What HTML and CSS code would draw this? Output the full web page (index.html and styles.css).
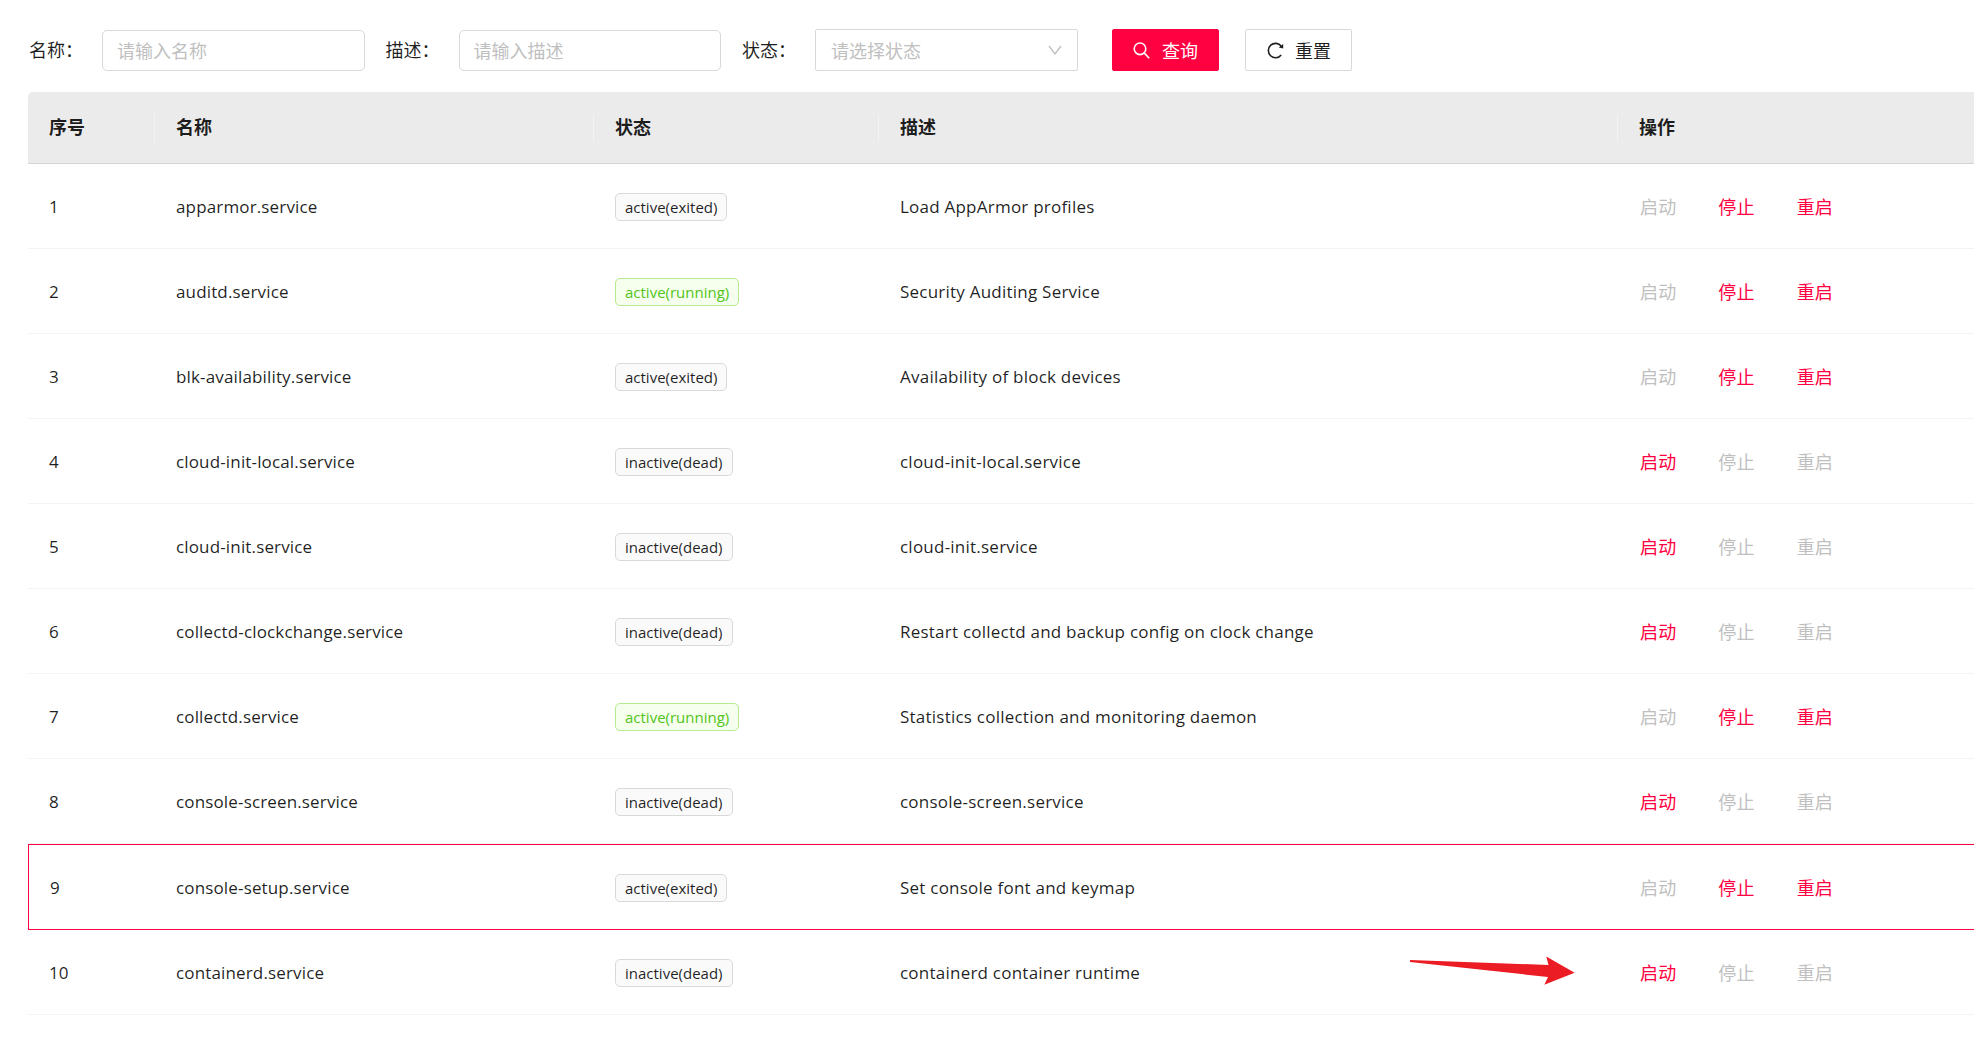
FILE: index.html
```html
<!DOCTYPE html>
<html lang="zh-CN">
<head>
    <meta charset="UTF-8">
    <meta name="viewport" content="width=device-width, initial-scale=1.0">
    <title>服务管理</title>
    <link rel="stylesheet" href="styles.css">
</head>
<body>

<div class="container">
    <form class="search-form">
        <label for="name">名称：</label>
        <input type="text" id="name" name="name" placeholder="请输入名称">

        <label for="desc">描述：</label>
        <input type="text" id="desc" name="desc" placeholder="请输入描述">

        <label for="status">状态：</label>
        <div class="select" id="status">
            <span>请选择状态</span>
            <svg class="arrow" viewBox="0 0 14 10"><path d="M1 1L7 9L13 1"/></svg>
        </div>

        <button type="button" class="btn btn-primary">
            <svg class="icon" viewBox="0 0 18 18"><circle cx="7" cy="7.8" r="5.8"/><path d="M11.1 11.9L16.2 17.2"/></svg>
            <span>查询</span>
        </button>
        <button type="reset" class="btn">
            <svg class="icon" viewBox="0 0 18 18"><path d="M15.2 14A7.2 7.2 0 1 1 15.3 5.2"/><path class="fill" d="M17.2 3V7.4L12.8 6.4Z"/></svg>
            <span>重置</span>
        </button>
    </form>

    <table class="service-table">
        <thead>
            <tr>
                <th class="col-index">序号</th>
                <th class="col-name">名称</th>
                <th class="col-status">状态</th>
                <th class="col-desc">描述</th>
                <th>操作</th>
            </tr>
        </thead>
        <tbody id="serviceList"></tbody>
    </table>
</div>

<!-- pointer to the start action of the last row -->
<svg class="pointer" viewBox="0 0 166 30"><path d="M0 4V6L138 21L134.3 28.7L164.6 16.7L136.3 0.6L138.5 9Z"/></svg>

<script src="script.js"></script>

</body>
</html>
```

FILE: styles.css
```css
* {
    box-sizing: border-box;
}

body {
    font-family: "Open Sans", "Noto Sans CJK SC", sans-serif;
    font-size: 18px;
    color: rgba(0, 0, 0, 0.88);
    background-color: #fff;
    margin: 0;
    padding: 0;
    overflow: hidden;
}

.container {
    width: 2060px;
    padding: 29px 0 0 28px;
}

.search-form {
    display: flex;
    align-items: center;
    height: 42px;
    margin-bottom: 21px;
    padding-left: 1px;
    font-family: "Noto Sans CJK SC", sans-serif;
}

label {
    width: 73px;
    padding-bottom: 2px;
    line-height: 40px;
    white-space: nowrap;
}

input, .select {
    width: 262.5px;
    height: 41px;
    margin-right: 21px;
    padding: 0 14px 2px;
    border: 1px solid #d9d9d9;
    border-radius: 5px;
    background-color: #fff;
    font-family: inherit;
    font-size: 18px;
}

input {
    margin-top: 1px;
}

input::placeholder {
    color: #bfbfbf;
    opacity: 1;
}

.select {
    display: flex;
    align-items: center;
    justify-content: space-between;
    width: 263px;
    height: 42px;
    margin-right: 34px;
    padding: 0 15px;
    border-radius: 2px;
    color: #bfbfbf;
}

.arrow {
    width: 14px;
    height: 10px;
    fill: none;
    stroke: #bfbfbf;
    stroke-width: 1.3;
}

.btn {
    display: flex;
    align-items: center;
    justify-content: center;
    gap: 11px;
    width: 107px;
    height: 42px;
    margin-right: 26px;
    padding: 0;
    border: 1px solid #d9d9d9;
    border-radius: 2px;
    background-color: #fff;
    color: rgba(0, 0, 0, 0.88);
    font-family: inherit;
    font-size: 18px;
    cursor: pointer;
}

.btn-primary {
    border-color: #ff0040;
    background-color: #ff0040;
    color: #fff;
}

.icon {
    width: 18px;
    height: 18px;
    fill: none;
    stroke: currentColor;
    stroke-width: 1.6;
}

.icon .fill {
    fill: currentColor;
    stroke: none;
}

.service-table {
    width: 2030px;
    table-layout: fixed;
    border-collapse: separate;
    border-spacing: 0;
}

th {
    position: relative;
    height: 72px;
    padding: 0 21px 3px;
    border-bottom: 1px solid #d3d3d3;
    background-color: #ebebeb;
    font-family: "Noto Sans CJK SC", sans-serif;
    font-weight: bold;
    text-align: left;
}

th:first-child {
    border-top-left-radius: 5px;
}

/* thin divider between header cells */
th:not(:last-child)::after {
    content: "";
    position: absolute;
    top: 22px;
    right: 0;
    width: 1px;
    height: 28px;
    background-color: #f3f3f3;
}

.col-index {
    width: 127px;
}

.col-name {
    width: 439px;
}

.col-status {
    width: 285px;
}

.col-desc {
    width: 739px;
}

td {
    height: 85px;
    padding: 0 21px;
    border-bottom: 1px solid #f3f3f3;
    font-size: 17px;
    letter-spacing: 0.15px;
}

td:nth-child(4) {
    letter-spacing: 0.23px;
}

.selected td {
    height: 86px;
    border-top: 1px solid #ff0040;
    border-bottom: 1px solid #ff0040;
}

.selected td:first-child {
    border-left: 1px solid #ff0040;
}

.tag {
    display: block;
    width: fit-content;
    height: 28px;
    margin-top: 2px;
    padding: 0 9px;
    border: 1px solid #d9d9d9;
    border-radius: 5px;
    background-color: #fafafa;
    font-size: 15px;
    letter-spacing: 0;
    line-height: 27px;
}

.tag.running {
    border-color: #b7eb8f;
    background-color: #f6ffed;
    color: #52c41a;
}

.actions {
    display: flex;
    gap: 42px;
    padding-left: 1px;
    font-family: "Noto Sans CJK SC", sans-serif;
    font-size: 18px;
}

.actions a {
    color: #ff0040;
}

.actions a.disabled {
    color: #bfbfbf;
}

.pointer {
    position: absolute;
    left: 1410px;
    top: 956px;
    width: 166px;
    height: 30px;
    fill: #ec1c24;
}
```

FILE: script.js
```js
const services = [
    ["apparmor.service", "active(exited)", "Load AppArmor profiles"],
    ["auditd.service", "active(running)", "Security Auditing Service"],
    ["blk-availability.service", "active(exited)", "Availability of block devices"],
    ["cloud-init-local.service", "inactive(dead)", "cloud-init-local.service"],
    ["cloud-init.service", "inactive(dead)", "cloud-init.service"],
    ["collectd-clockchange.service", "inactive(dead)", "Restart collectd and backup config on clock change"],
    ["collectd.service", "active(running)", "Statistics collection and monitoring daemon"],
    ["console-screen.service", "inactive(dead)", "console-screen.service"],
    ["console-setup.service", "active(exited)", "Set console font and keymap"],
    ["containerd.service", "inactive(dead)", "containerd container runtime"]
];

const selectedRow = 9;

document.getElementById("serviceList").innerHTML = services.map(function(item, i) {
    const active = item[1].startsWith("active");
    const running = item[1] === "active(running)";
    const off = "disabled";

    return `
        <tr class="${i + 1 === selectedRow ? "selected" : ""}">
            <td>${i + 1}</td>
            <td>${item[0]}</td>
            <td><span class="tag ${running ? "running" : ""}">${item[1]}</span></td>
            <td>${item[2]}</td>
            <td>
                <div class="actions">
                    <a class="${active ? off : ""}">启动</a>
                    <a class="${active ? "" : off}">停止</a>
                    <a class="${active ? "" : off}">重启</a>
                </div>
            </td>
        </tr>`;
}).join("");
```
